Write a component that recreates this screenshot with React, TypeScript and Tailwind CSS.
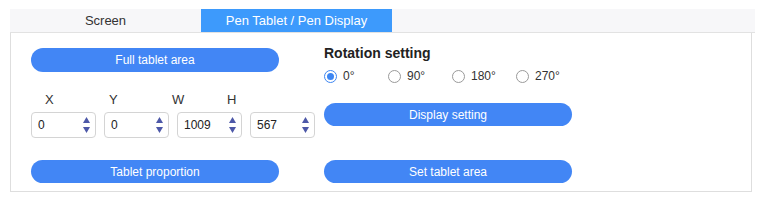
import React from "react";

const font = { fontFamily: '"Liberation Sans", Arial, sans-serif' };

function Spin({ value }: { value: string }) {
  return (
    <div className="flex h-[26px] w-[65px] items-center justify-between rounded-[4px] border border-[#d4d4d4] bg-white pl-[6px] pr-[5px]">
      <span className="text-[12px] text-[#222]">{value}</span>
      <div className="flex flex-col items-center gap-[4px]">
        <svg width="7" height="6" viewBox="0 0 7 6"><path d="M3.5 0 L7 6 L0 6 Z" fill="#4d58a8" /></svg>
        <svg width="7" height="6" viewBox="0 0 7 6"><path d="M0 0 L7 0 L3.5 6 Z" fill="#4d58a8" /></svg>
      </div>
    </div>
  );
}

function Btn({ label, className = "" }: { label: string; className?: string }) {
  return (
    <div className={`flex h-[23px] w-[248px] items-center justify-center rounded-full bg-[#4286f5] text-[12px] text-white ${className}`}>
      {label}
    </div>
  );
}

function Radio({ label, checked }: { label: string; checked?: boolean }) {
  return (
    <div className="flex w-[64px] items-center gap-[6px]">
      <div className={`flex h-[13px] w-[13px] items-center justify-center rounded-full border ${checked ? "border-[#3d86f2]" : "border-[#9a9a9a]"} bg-white`}>
        {checked && <div className="h-[7px] w-[7px] rounded-full bg-[#3d86f2]" />}
      </div>
      <span className="text-[12px] text-[#333]">{label}</span>
    </div>
  );
}

export default function App() {
  return (
    <div className="h-[212px] w-[762px] bg-white pl-[10px] pt-[9px]" style={font}>
      <div className="flex h-[24px] w-[745px] bg-[#f7f7f9] border-b border-[#e2e2e2]">
        <div className="flex w-[191px] items-center justify-center text-[13px] text-[#333]">Screen</div>
        <div className="flex w-[191px] items-center justify-center bg-[#3d9afc] text-[13px] text-white">Pen Tablet / Pen Display</div>
      </div>
      <div className="flex h-[159px] w-[742px] border-x border-b border-[#dedede] pl-[20px]">
        <div className="flex w-[293px] flex-col pt-[15px]">
          <Btn label="Full tablet area" className="h-[24px]" />
          <div className="mt-[21px] flex h-[14px] items-center text-[13px] text-[#333]">
            <span className="w-[66px] pl-[14px]">X</span>
            <span className="w-[67px] pl-[12px]">Y</span>
            <span className="w-[59px] pl-[8px]">W</span>
            <span className="pl-[4px]">H</span>
          </div>
          <div className="mt-[5px] flex gap-[8px]">
            <Spin value="0" />
            <Spin value="0" />
            <Spin value="1009" />
            <Spin value="567" />
          </div>
          <Btn label="Tablet proportion" className="mt-[22px]" />
        </div>
        <div className="flex flex-col pt-[12px]">
          <div className="h-[16px] text-[14px] font-bold leading-[16px] text-[#222]">Rotation setting</div>
          <div className="mt-[8px] flex h-[14px] items-center">
            <Radio label="0°" checked />
            <Radio label="90°" />
            <Radio label="180°" />
            <Radio label="270°" />
          </div>
          <Btn label="Display setting" className="mt-[20px]" />
          <Btn label="Set tablet area" className="mt-[34px]" />
        </div>
      </div>
    </div>
  );
}
